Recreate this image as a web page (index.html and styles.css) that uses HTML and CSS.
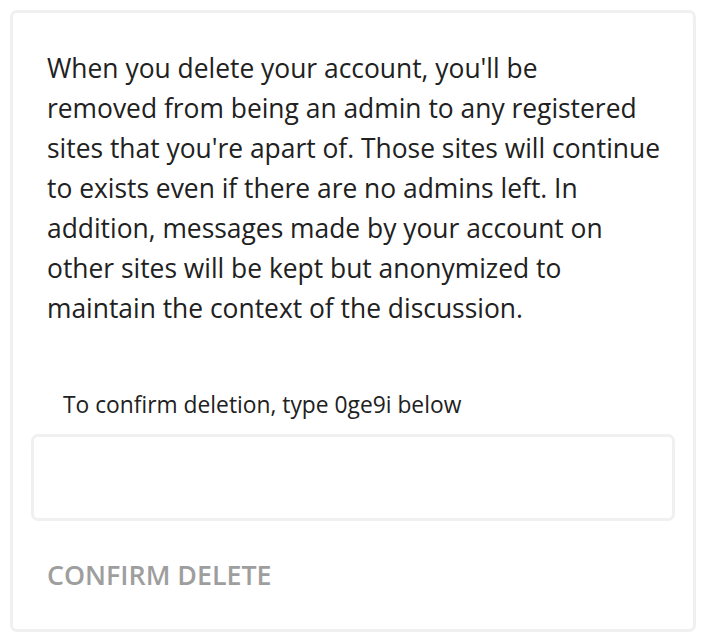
FILE: index.html
```html
<!DOCTYPE html>
<html>
<head>
<meta charset="utf-8">
<link rel="stylesheet" href="styles.css">
</head>
<body>
<div class="card">
  <p class="notice">When you delete your account, you'll be<br>removed from being an admin to any registered<br>sites that you're apart of. Those sites will continue<br>to exists even if there are no admins left. In<br>addition, messages made by your account on<br>other sites will be kept but anonymized to<br>maintain the context of the discussion.</p>
  <div class="confirm">
    <label class="confirm-label" for="confirm-input">To confirm deletion, type 0ge9i below</label>
    <input id="confirm-input" class="confirm-input" type="text">
  </div>
  <button class="delete-btn" type="button">CONFIRM DELETE</button>
</div>
</body>
</html>
```

FILE: styles.css
```css
html, body {
  margin: 0;
  padding: 0;
  background: #ffffff;
}
body {
  padding: 10px 10px;
  font-family: "Open Sans", "Noto Sans", sans-serif;
  color: #212121;
}
.card {
  width: 686px;
  box-sizing: border-box;
  border: 3px solid #f0f0f0;
  border-radius: 7px;
  padding: 35px 18px 30px;
  height: 622px;
}
.notice {
  margin: 0 0 0 16px;
  font-size: 26.4px;
  line-height: 40px;
  white-space: nowrap;
}
.confirm {
  display: flex;
  flex-direction: column;
  margin-top: 61px;
}
.confirm-label {
  padding-left: 32px;
  font-size: 22.8px;
  line-height: 32px;
}
.confirm-input {
  margin-top: 13px;
  height: 87px;
  box-sizing: border-box;
  border: 3px solid #f0f0f0;
  border-radius: 7px;
  outline: none;
  font-size: 22px;
  padding: 0 16px;
}
.delete-btn {
  margin-top: 32px;
  margin-left: 12px;
  border: none;
  background: none;
  padding: 4px 4px;
  font-family: inherit;
  font-size: 26.8px;
  line-height: 36px;
  font-weight: 600;
  color: #9e9e9e;
  cursor: pointer;
}
```
